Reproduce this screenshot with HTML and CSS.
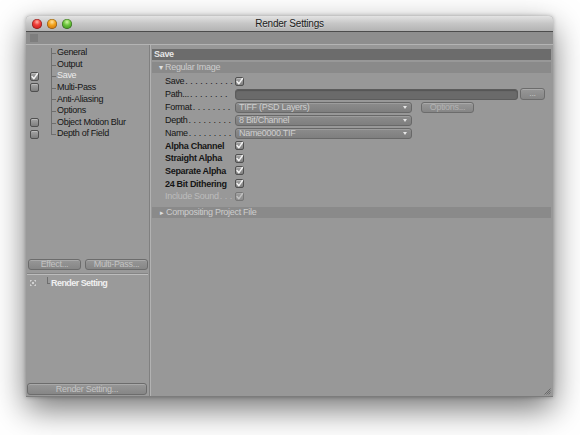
FILE: index.html
```html
<!DOCTYPE html>
<html>
<head>
<meta charset="utf-8">
<link rel="stylesheet" href="styles.css">
</head>
<body>
<div class="stage">
  <div class="window">
    <div class="titlebar">
      <div class="lights">
        <span class="light red"></span>
        <span class="light orange"></span>
        <span class="light green"></span>
      </div>
      <div class="title">Render Settings</div>
      <div></div>
    </div>
    <div class="toolbar"><span class="grip"></span></div>
    <div class="content">
      <div class="left">
        <div class="tree-list">
          <div class="trow"><span class="tcheck"></span><span class="tline"></span><span class="tlabel">General</span></div>
          <div class="trow"><span class="tcheck"></span><span class="tline"></span><span class="tlabel">Output</span></div>
          <div class="trow sel"><span class="tcheck"><span class="cb on"><svg viewBox="0 0 9 9"><polyline points="2,4.5 3.8,6.8 7.5,1.5"/></svg></span></span><span class="tline"></span><span class="tlabel">Save</span></div>
          <div class="trow"><span class="tcheck"><span class="cb"></span></span><span class="tline"></span><span class="tlabel">Multi-Pass</span></div>
          <div class="trow"><span class="tcheck"></span><span class="tline"></span><span class="tlabel">Anti-Aliasing</span></div>
          <div class="trow"><span class="tcheck"></span><span class="tline"></span><span class="tlabel">Options</span></div>
          <div class="trow"><span class="tcheck"><span class="cb"></span></span><span class="tline"></span><span class="tlabel">Object Motion Blur</span></div>
          <div class="trow last"><span class="tcheck"><span class="cb"></span></span><span class="tline"></span><span class="tlabel">Depth of Field</span></div>
        </div>
        <div class="btn-row">
          <span class="btn effect">Effect...</span>
          <span class="btn mpass">Multi-Pass...</span>
        </div>
        <div class="sep"></div>
        <div class="render-list">
          <div class="rrow">
            <span class="ricon"><svg viewBox="0 0 6 6"><path d="M0.5 0.5h1M4.5 0.5h1M0.5 5.5h1M4.5 5.5h1M0.5 0.5v1M5.5 0.5v1M0.5 4.5v1M5.5 4.5v1M2.5 2.5h1v1h-1z"/></svg></span>
            <span class="rline"></span>
            <span class="rlabel">Render Setting</span>
          </div>
        </div>
        <div class="btn bottom-btn">Render Setting...</div>
      </div>
      <div class="right">
        <div class="savebar">Save</div>
        <div class="group open"><span class="tri">&#9662;</span>Regular Image</div>
        <div class="rows">
          <div class="row">
            <span class="lab"><span>Save</span><span class="dots">. . . . . . . . . .</span></span>
            <span class="cb on"><svg viewBox="0 0 9 9"><polyline points="2,4.5 3.8,6.8 7.5,1.5"/></svg></span>
          </div>
          <div class="row">
            <span class="lab"><span>Path...</span><span class="dots"> . . . . . . . .</span></span>
            <span class="path"></span>
            <span class="btn dots-btn">...</span>
          </div>
          <div class="row">
            <span class="lab"><span>Format</span><span class="dots"> . . . . . . . .</span></span>
            <span class="drop">TIFF (PSD Layers)<span class="arr"></span></span>
            <span class="btn opts">Options...</span>
          </div>
          <div class="row">
            <span class="lab"><span>Depth</span><span class="dots"> . . . . . . . . .</span></span>
            <span class="drop">8 Bit/Channel<span class="arr"></span></span>
          </div>
          <div class="row">
            <span class="lab"><span>Name</span><span class="dots"> . . . . . . . . .</span></span>
            <span class="drop">Name0000.TIF<span class="arr"></span></span>
          </div>
          <div class="row crow">
            <span class="lab b">Alpha Channel</span>
            <span class="cb on"><svg viewBox="0 0 9 9"><polyline points="2,4.5 3.8,6.8 7.5,1.5"/></svg></span>
          </div>
          <div class="row crow">
            <span class="lab b">Straight Alpha</span>
            <span class="cb on"><svg viewBox="0 0 9 9"><polyline points="2,4.5 3.8,6.8 7.5,1.5"/></svg></span>
          </div>
          <div class="row crow">
            <span class="lab b">Separate Alpha</span>
            <span class="cb on"><svg viewBox="0 0 9 9"><polyline points="2,4.5 3.8,6.8 7.5,1.5"/></svg></span>
          </div>
          <div class="row crow">
            <span class="lab b">24 Bit Dithering</span>
            <span class="cb on"><svg viewBox="0 0 9 9"><polyline points="2,4.5 3.8,6.8 7.5,1.5"/></svg></span>
          </div>
          <div class="row crow dis">
            <span class="lab"><span>Include Sound</span><span class="dots"> . . .</span></span>
            <span class="cb on"><svg viewBox="0 0 9 9"><polyline points="2,4.5 3.8,6.8 7.5,1.5"/></svg></span>
          </div>
        </div>
        <div class="group closed"><span class="tri">&#9656;</span>Compositing Project File</div>
      </div>
    </div>
    <span class="resize"><svg viewBox="0 0 8 8"><path d="M7.5 1.5L1.5 7.5M7.5 3.5L3.5 7.5M7.5 5.5L5.5 7.5"/></svg></span>
  </div>
</div>
</body>
</html>
```

FILE: styles.css
```css
html, body {
  margin: 0;
  padding: 0;
  background: #ffffff;
}
body {
  font-family: "Liberation Sans", Arial, sans-serif;
  font-size: 9px;
  letter-spacing: -0.3px;
  color: #151515;
}
.stage {
  padding: 16px 0 38px 26px;
}
.window {
  position: relative;
  width: 527px;
  height: 381px;
  display: flex;
  flex-direction: column;
  background: #999999;
  border-radius: 4px 4px 0 0;
  box-shadow: 0 12px 32px rgba(0, 0, 0, 0.55), 0 0 4px rgba(0, 0, 0, 0.3);
}
.titlebar {
  height: 15px;
  display: grid;
  grid-template-columns: 1fr auto 1fr;
  align-items: center;
  background: linear-gradient(#e3e3e3, #c6c6c6 50%, #b3b3b3);
  border-bottom: 1px solid #4c4c4c;
  border-radius: 4px 4px 0 0;
}
.lights {
  display: flex;
  gap: 5px;
  padding-left: 6px;
  padding-top: 1px;
}
.light {
  width: 10px;
  height: 10px;
  border-radius: 50%;
  box-shadow: inset 0 0 0 0.5px rgba(0, 0, 0, 0.45);
}
.light.red {
  background: radial-gradient(circle at 50% 30%, #ffb3a8 0, #f0403a 35%, #b40c0c 100%);
}
.light.orange {
  background: radial-gradient(circle at 50% 30%, #ffe2a0 0, #f3a31c 38%, #bb5d07 100%);
}
.light.green {
  background: radial-gradient(circle at 50% 30%, #d2f7a6 0, #6cc63c 38%, #2d7e12 100%);
}
.title {
  font-size: 10px;
  letter-spacing: -0.2px;
  color: #1c1c1c;
  text-shadow: 0 1px 0 rgba(255, 255, 255, 0.35);
}
.toolbar {
  height: 12px;
  background: #8e8e8e;
  border-bottom: 1px solid #b4b4b4;
  display: flex;
  align-items: center;
  padding-left: 4px;
}
.grip {
  width: 8px;
  height: 8px;
  background: radial-gradient(circle, #6c6c6c 0.6px, transparent 0.8px) 0 0 / 2px 2px;
}
.content {
  flex: 1;
  display: flex;
  min-height: 0;
  border-bottom: 1px solid #7c7c7c;
}
.left {
  width: 124px;
  display: flex;
  flex-direction: column;
  border-right: 1px solid #808080;
  background: #9a9a9a;
}
.tree-list {
  height: 214px;
  box-sizing: border-box;
  padding-top: 2px;
}
.trow {
  height: 11.65px;
  display: grid;
  grid-template-columns: 25px 5px 1fr;
  align-items: stretch;
}
.tcheck {
  display: flex;
  align-items: center;
  padding-left: 4px;
}
.tline {
  background:
    linear-gradient(#6e6e6e, #6e6e6e) 0 0 / 1px 100% no-repeat,
    linear-gradient(#6e6e6e, #6e6e6e) 0 55% / 100% 1px no-repeat;
}
.trow:first-child .tline {
  background:
    linear-gradient(#6e6e6e, #6e6e6e) 0 1px / 1px 100% no-repeat,
    linear-gradient(#6e6e6e, #6e6e6e) 0 55% / 100% 1px no-repeat;
}
.trow.last .tline {
  background:
    linear-gradient(#6e6e6e, #6e6e6e) 0 0 / 1px 55% no-repeat,
    linear-gradient(#6e6e6e, #6e6e6e) 0 55% / 100% 1px no-repeat;
}
.tlabel {
  padding-left: 1px;
  line-height: 11.65px;
  white-space: nowrap;
}
.trow.sel .tlabel {
  color: #ececec;
}
.cb {
  width: 9px;
  height: 9px;
  box-sizing: border-box;
  border: 1px solid #505050;
  border-radius: 2px;
  background: linear-gradient(#a4a4a4, #7f7f7f);
  box-shadow: inset 0 1px 0 rgba(255, 255, 255, 0.25);
  display: inline-flex;
  flex-shrink: 0;
}
.cb svg {
  width: 9px;
  height: 9px;
  margin: -1px;
  overflow: visible;
}
.cb polyline {
  fill: none;
  stroke: #f2f2f2;
  stroke-width: 1.4;
  stroke-linecap: round;
  stroke-linejoin: round;
}
.btn {
  box-sizing: border-box;
  height: 11px;
  border: 1px solid #6c6c6c;
  border-radius: 3px;
  background: linear-gradient(#979797, #868686);
  box-shadow: inset 0 1px 0 rgba(255, 255, 255, 0.18);
  color: #c4c4c4;
  text-align: center;
  line-height: 9px;
  white-space: nowrap;
  display: inline-block;
}
.btn-row {
  display: flex;
  gap: 4px;
  padding: 0 1px 0 2px;
  margin-bottom: 3px;
}
.btn.effect {
  width: 53px;
}
.btn.mpass {
  flex: 1;
}
.sep {
  height: 1px;
  background: #bdbdbd;
  border-top: 1px solid #858585;
  margin: 0 1px 2px 1px;
}
.render-list {
  flex: 1;
}
.rrow {
  height: 12px;
  display: grid;
  grid-template-columns: 18px 3px 1fr;
  align-items: stretch;
  padding-left: 3px;
}
.ricon {
  display: flex;
  align-items: center;
  padding-left: 1px;
}
.ricon svg {
  width: 6px;
  height: 6px;
}
.ricon path {
  fill: none;
  stroke: #e4e4e4;
  stroke-width: 1;
}
.rline {
  background:
    linear-gradient(#6e6e6e, #6e6e6e) 0 0 / 1px 55% no-repeat,
    linear-gradient(#6e6e6e, #6e6e6e) 0 55% / 100% 1px no-repeat;
}
.rlabel {
  padding-left: 1px;
  line-height: 12px;
  color: #f0f0f0;
  font-weight: bold;
  letter-spacing: -0.55px;
}
.bottom-btn {
  height: 12px;
  line-height: 10px;
  margin: 0 2px 1px 1px;
}
.right {
  flex: 1;
  border-left: 1px solid #b2b2b2;
  padding: 4px 2px 0 1px;
  background: #989898;
  display: flex;
  flex-direction: column;
}
.savebar {
  height: 11px;
  line-height: 11px;
  background: #6c6c6c;
  color: #e6e6e6;
  font-weight: bold;
  padding-left: 2px;
}
.group {
  height: 11px;
  line-height: 11px;
  background: #8a8a8a;
  color: #cdcdcd;
  padding-left: 7px;
}
.group.open {
  margin-top: 2px;
}
.group .tri {
  display: inline-block;
  width: 6px;
  font-size: 8px;
  color: #e0e0e0;
}
.group.closed {
  margin-top: 5px;
  padding-left: 8px;
}
.group.closed .tri {
  width: 6px;
  font-size: 7px;
}
.rows {
  padding: 2px 6px 0 13px;
}
.row {
  height: 12.9px;
  display: flex;
  align-items: center;
}
.row.crow {
  height: 12.6px;
}
.lab {
  width: 70px;
  flex-shrink: 0;
  display: flex;
  white-space: nowrap;
}
.lab.b {
  font-weight: bold;
}
.dots {
  letter-spacing: 0;
  padding-left: 1px;
}
.row.dis .lab {
  color: #bcbcbc;
}
.row.dis .cb {
  opacity: 0.45;
}
.path {
  box-sizing: border-box;
  height: 11px;
  width: 283px;
  background: #6a6a6a;
  border: 1px solid #5c5c5c;
  border-radius: 3px;
  box-shadow: inset 0 1px 1px rgba(0, 0, 0, 0.2);
}
.dots-btn {
  width: 25px;
  margin-left: 2px;
  height: 12px;
  line-height: 8px;
}
.drop {
  position: relative;
  box-sizing: border-box;
  height: 11px;
  width: 177px;
  background: linear-gradient(#8c8c8c, #7e7e7e);
  border: 1px solid #686868;
  border-radius: 3px;
  box-shadow: inset 0 1px 0 rgba(255, 255, 255, 0.15);
  color: #cfcfcf;
  line-height: 9px;
  padding-left: 3px;
  white-space: nowrap;
}
.arr {
  position: absolute;
  right: 4px;
  top: 3px;
  width: 0;
  height: 0;
  border-left: 2.5px solid transparent;
  border-right: 2.5px solid transparent;
  border-top: 3px solid #e6e6e6;
}
.opts {
  width: 53px;
  margin-left: 9px;
  color: #b2b2b2;
}
.resize {
  position: absolute;
  right: 2px;
  bottom: 2px;
  width: 8px;
  height: 8px;
}
.resize svg {
  width: 8px;
  height: 8px;
  display: block;
}
.resize path {
  stroke: #6a6a6a;
  stroke-width: 1;
  fill: none;
}
```
